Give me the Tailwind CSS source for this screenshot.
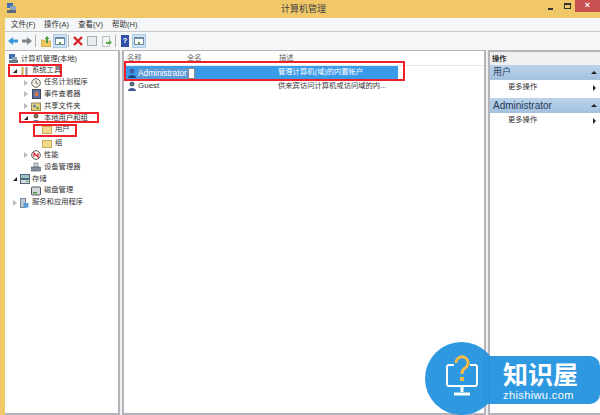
<!DOCTYPE html>
<html lang="zh">
<head>
<meta charset="UTF-8">
<title>计算机管理</title>
<script src="https://cdn.jsdelivr.net/npm/@tailwindcss/browser@4"></script>
</head>
<body class="w-[600px] h-[415px] overflow-hidden bg-[#f0c868] font-['Liberation_Sans','Noto_Sans_CJK_SC',sans-serif] text-[7.300px] text-[#333]">
<div class="relative w-[600px] h-[415px] flex flex-col">
  <!-- title bar -->
  <div class="h-[18px] flex relative shrink-0">
    <svg class="ml-[6px] mt-[3px] w-[11px] h-[11px]" viewBox="0 0 11 11"><rect x="1" y="0" width="6" height="5" fill="#3f6fb5"/><rect x="4" y="3" width="6" height="4" fill="#8fa3bb"/><rect x="1" y="7" width="9" height="3" fill="#5a6a80"/></svg>
    <div class="absolute left-[281px] top-[3px] text-[9px] leading-[12px] text-[#444]">计算机管理</div>
    <div class="ml-auto flex items-start h-full">
      <div class="w-[5px] h-[2px] bg-[#333] mt-[8px] mr-[11px]"></div>
      <div class="w-[7px] h-[6px] border border-[#333] border-t-2 mt-[3px] mr-[4px]"></div>
      <div class="w-[25px] h-[12px] bg-[#c75050] text-white text-[9px] leading-[11px] text-center font-bold">×</div>
    </div>
  </div>
  <div class="flex-1 ml-[5px] bg-[#f0f0f0] flex flex-col min-h-0">
    <!-- menu -->
    <div class="h-[14px] bg-[#f5f6f7] border-b border-[#c8c8c8] flex items-center pl-[6px] text-[7.500px] shrink-0">
      <span class="w-[33px]">文件(F)</span><span class="w-[34px]">操作(A)</span><span class="w-[34px]">查看(V)</span><span>帮助(H)</span>
    </div>
    <!-- toolbar -->
    <div class="h-[18px] bg-[#f5f6f7] flex items-center pl-[3px] shrink-0">
      <svg class="w-[10px] h-[10px] mr-[4px]" viewBox="0 0 10 10"><path d="M0 5 L5 1 V3.500 H10 V6.500 H5 V9 Z" fill="#3b9bd8"/></svg>
      <svg class="w-[10px] h-[10px] mr-[3px]" viewBox="0 0 10 10"><path d="M10 5 L5 1 V3.500 H0 V6.500 H5 V9 Z" fill="#7f868c"/></svg>
      <div class="w-px h-[12px] bg-[#b0b0b0] mr-[5px]"></div>
      <svg class="w-[10px] h-[11px] mr-[2px]" viewBox="0 0 10 11"><path d="M0 4h3l1 1h6v6H0z" fill="#ecc763" stroke="#b79a45" stroke-width=".6"/><path d="M6 0 L8.500 3 H7 V7 H5 V3 H3.500z" fill="#4f9a3c"/></svg>
      <div class="w-[14px] h-[14px] bg-[#cfe2f5] border border-[#a9cbe8] flex items-center justify-center mr-[1px]"><div class="w-[10px] h-[8px] bg-white border border-[#6f8aa0] border-t-2 flex items-end justify-center"><span class="w-[2px] h-[2px] bg-[#4f9a3c]"></span></div></div>
      <div class="w-px h-[12px] bg-[#b0b0b0] mr-[4px]"></div>
      <svg class="w-[10px] h-[10px] mr-[4px]" viewBox="0 0 10 10"><path d="M1 1 L9 9 M9 1 L1 9" stroke="#d8232a" stroke-width="2.400"/></svg>
      <div class="w-[10px] h-[10px] bg-[#e8eced] border border-[#a8b0b4] mr-[5px]"></div>
      <svg class="w-[10px] h-[11px] mr-[3px]" viewBox="0 0 10 11"><rect x="0.500" y="0.500" width="7" height="10" fill="#f4f6f6" stroke="#a4acb0" stroke-width=".7"/><path d="M4 6h3V4l3 2.500-3 2.500V8H4z" fill="#5aa845"/></svg>
      <div class="w-px h-[12px] bg-[#b0b0b0] mr-[5px]"></div>
      <div class="w-[8px] h-[12px] bg-[#2f4fa8] text-white text-[8px] leading-[12px] text-center font-bold mr-[3px]">?</div>
      <div class="w-[14px] h-[14px] bg-[#cfe2f5] border border-[#a9cbe8] flex items-center justify-center"><div class="w-[10px] h-[8px] bg-white border border-[#6f8aa0] border-t-2 flex items-end justify-center"><span class="w-[2px] h-[2px] bg-[#4f9a3c]"></span></div></div>
    </div>
    <!-- panes -->
    <div class="flex-1 flex min-h-0 gap-[2px] bg-[#f0f0f0]">
      <!-- tree -->
      <div class="w-[115px] bg-white border-r-2 border-t border-b-2 border-[#b4b4ba] pt-[2px] shrink-0 relative">
        <div class="h-[12px] flex items-center pl-[4px] gap-[3px]"><svg class="w-[9px] h-[10px] shrink-0" viewBox="0 0 9 10"><rect x="0" y="0" width="6" height="5" fill="#3f6fb5"/><rect x="3" y="3" width="5" height="3" fill="#8fa3bb"/><rect x="0" y="6" width="9" height="3" fill="#6b7a8c"/></svg><span>计算机管理(本地)</span></div>
        <div class="h-[11.800px] flex items-center pl-[8px]"><span class="w-0 h-0 border-l-[4px] border-l-transparent border-b-[4px] border-b-[#222]"></span><svg class="w-[9px] h-[10px] ml-[3px] mr-[3px] shrink-0" viewBox="0 0 9 10"><path d="M2.500 1v9" stroke="#c9a846" stroke-width="2"/><path d="M6.500 1v9" stroke="#8a8f94" stroke-width="2"/></svg><span>系统工具</span></div>
        <div class="h-[11.800px] flex items-center pl-[19px]"><span class="w-0 h-0 border-y-[3px] border-y-transparent border-l-[4px] border-l-[#bbb]"></span><svg class="w-[10px] h-[10px] ml-[3px] mr-[3px] shrink-0" viewBox="0 0 10 10"><circle cx="5" cy="5" r="4.300" fill="#f1ede2" stroke="#6b6b6b"/><path d="M5 2.500V5l2 1" fill="none" stroke="#444" stroke-width=".8"/></svg><span>任务计划程序</span></div>
        <div class="h-[11.800px] flex items-center pl-[19px]"><span class="w-0 h-0 border-y-[3px] border-y-transparent border-l-[4px] border-l-[#bbb]"></span><svg class="w-[9px] h-[10px] ml-[4px] mr-[3px] shrink-0" viewBox="0 0 9 10"><rect x="0.500" y="0.500" width="8" height="9" fill="#5f72a8" stroke="#445"/><rect x="3" y="3" width="3" height="4" fill="#d9773a"/></svg><span>事件查看器</span></div>
        <div class="h-[11.800px] flex items-center pl-[19px]"><span class="w-0 h-0 border-y-[3px] border-y-transparent border-l-[4px] border-l-[#bbb]"></span><svg class="w-[10px] h-[10px] ml-[3px] mr-[3px] shrink-0" viewBox="0 0 10 10"><rect x="0.500" y="2" width="9" height="7.500" fill="#e2cf83" stroke="#9a8a50"/><circle cx="3.500" cy="5" r="1.200" fill="#3f6fb5"/><circle cx="6.500" cy="7" r="1.200" fill="#4f9a3c"/></svg><span>共享文件夹</span></div>
        <div class="h-[11.800px] flex items-center pl-[19px]"><span class="w-0 h-0 border-l-[4px] border-l-transparent border-b-[4px] border-b-[#222]"></span><svg class="w-[10px] h-[10px] ml-[3px] mr-[3px] shrink-0" viewBox="0 0 10 10"><circle cx="5" cy="3" r="2.500" fill="#7b6a55"/><path d="M1 10c0-4 8-4 8 0z" fill="#3f6fb5"/></svg><span>本地用户和组</span></div>
        <div class="h-[11.800px] flex items-center pl-[37px] gap-[3px]"><span class="w-[10px] h-[8px] bg-[#f3d98b] border border-[#c9a95a]"></span><span>用户</span></div>
        <div class="h-[11.800px] flex items-center pl-[37px] gap-[3px] mt-[2px]"><span class="w-[10px] h-[8px] bg-[#f3d98b] border border-[#c9a95a]"></span><span>组</span></div>
        <div class="h-[11.800px] flex items-center pl-[19px]"><span class="w-0 h-0 border-y-[3px] border-y-transparent border-l-[4px] border-l-[#bbb]"></span><svg class="w-[10px] h-[10px] ml-[3px] mr-[3px] shrink-0" viewBox="0 0 10 10"><circle cx="5" cy="5" r="4.300" fill="#fff" stroke="#555"/><path d="M3 7V3l4 4V3" fill="none" stroke="#d8232a" stroke-width="1.200"/></svg><span>性能</span></div>
        <div class="h-[11.800px] flex items-center pl-[26px]"><svg class="w-[10px] h-[10px] mr-[3px] shrink-0" viewBox="0 0 10 10"><rect x="3" y="1" width="4" height="4" fill="#cfd6da" stroke="#667" stroke-width=".6"/><rect x="0.500" y="5" width="9" height="4" fill="#7f8e9a" stroke="#556" stroke-width=".6"/></svg><span>设备管理器</span></div>
        <div class="h-[11.800px] flex items-center pl-[8px]"><span class="w-0 h-0 border-l-[4px] border-l-transparent border-b-[4px] border-b-[#222]"></span><svg class="w-[10px] h-[10px] ml-[3px] mr-[2px] shrink-0" viewBox="0 0 10 10"><rect x="0.500" y="0.500" width="9" height="4" fill="#9cc3c8" stroke="#567"/><rect x="0.500" y="5.500" width="9" height="4" fill="#d6dde0" stroke="#567"/><rect x="6" y="7" width="2" height="1" fill="#4f9a3c"/></svg><span>存储</span></div>
        <div class="h-[11.800px] flex items-center pl-[26px]"><svg class="w-[10px] h-[10px] mr-[3px] shrink-0" viewBox="0 0 10 10"><rect x="0.500" y="1" width="9" height="8" rx="1" fill="#d4d8d8" stroke="#556"/><rect x="2" y="6" width="4" height="1.500" fill="#4f9a3c"/></svg><span>磁盘管理</span></div>
        <div class="h-[11.800px] flex items-center pl-[8px]"><span class="w-0 h-0 border-y-[3px] border-y-transparent border-l-[4px] border-l-[#bbb]"></span><svg class="w-[9px] h-[10px] ml-[3px] mr-[3px] shrink-0" viewBox="0 0 9 10"><rect x="0.500" y="0.500" width="5" height="9" fill="#b8c8d4" stroke="#789"/><rect x="3.500" y="5" width="5" height="4.500" fill="#5aa0d8"/></svg><span>服务和应用程序</span></div>
        <!-- red callouts -->
        <div class="absolute left-[3px] top-[13px] w-[54px] h-[13px] border-2 border-[#f0202a]"></div>
        <div class="absolute left-[14px] top-[61px] w-[80px] h-[11px] border-2 border-[#f0202a]"></div>
        <div class="absolute left-[28px] top-[73px] w-[44px] h-[13px] border-2 border-[#f0202a]"></div>
      </div>
      <!-- list -->
      <div class="w-[364px] bg-white border-x-2 border-t border-b-2 border-[#b4b4ba] relative shrink-0">
        <div class="h-[15px] border-b border-[#e8e8e8] grid grid-cols-[60px_92px_1fr] pl-[3px] items-center text-[#666]">
          <span>名称</span><span>全名</span><span>描述</span>
        </div>
        <div class="h-[13px] ml-[2px] grid grid-cols-[61px_91px_1fr] items-center bg-[#3a9be8] w-[272px] text-white">
          <span class="flex items-center h-full pl-[1px]"><svg class="w-[10px] h-[10px] shrink-0" viewBox="0 0 10 10"><circle cx="5" cy="3" r="2.500" fill="#3f5ea8"/><path d="M1 10c0-4 8-4 8 0z" fill="#24448a"/></svg></span>
          <span></span>
          <span class="whitespace-nowrap">管理计算机(域)的内置帐户</span>
        </div>
        <div class="absolute left-[13px] top-[17px] h-[11px] flex">
          <span class="bg-[#5a9ad8] text-white h-[11px] leading-[11px] text-[8.300px] px-[1px] whitespace-nowrap">Administrator</span>
          <span class="bg-white w-[7px] h-[11px] border border-[#888]"></span>
        </div>
        <div class="mt-[1px] h-[12px] ml-[2px] grid grid-cols-[61px_91px_1fr] items-center">
          <span class="flex items-center gap-[1px] pl-[1px] text-[8px]"><svg class="w-[10px] h-[10px] shrink-0" viewBox="0 0 10 10"><circle cx="5" cy="3" r="2.500" fill="#5a6a80"/><path d="M1 10c0-4 8-4 8 0z" fill="#3a5a90"/></svg>Guest</span>
          <span></span>
          <span class="whitespace-nowrap">供来宾访问计算机或访问域的内...</span>
        </div>
        <div class="absolute left-[0px] top-[10px] w-[281px] h-[20px] border-2 border-[#f0202a]"></div>
      </div>
      <!-- actions -->
      <div class="flex-1 bg-white border-l-2 border-t-2 border-b-2 border-[#b4b4ba] min-w-0">
        <div class="h-[13px] bg-[#f0f0f0] pl-[2px] leading-[13px] font-bold text-[#333]">操作</div>
        <div class="h-[15px] bg-[linear-gradient(#bcd3ea,#a3c0de)] pl-[3px] flex items-center text-[9px] text-[#1e3a5a]">用户<span class="ml-auto mr-[3px] w-0 h-0 border-x-[3px] border-x-transparent border-b-[3px] border-b-[#222]"></span></div>
        <div class="h-[18px] pl-[18px] pb-[3px] flex items-center">更多操作<span class="ml-auto mr-[4px] w-0 h-0 border-y-[3px] border-y-transparent border-l-[3px] border-l-[#222]"></span></div>
        <div class="h-[15px] bg-[linear-gradient(#bcd3ea,#a3c0de)] pl-[3px] flex items-center text-[10px] text-[#1e3a5a]">Administrator<span class="ml-auto mr-[3px] w-0 h-0 border-x-[3px] border-x-transparent border-b-[3px] border-b-[#222]"></span></div>
        <div class="h-[18px] pl-[18px] pb-[3px] flex items-center">更多操作<span class="ml-auto mr-[4px] w-0 h-0 border-y-[3px] border-y-transparent border-l-[3px] border-l-[#222]"></span></div>
      </div>
    </div>
  </div>
  <!-- watermark -->
  <div class="absolute left-[425px] top-[342px] w-[175px] h-[73px] opacity-95">
    <div class="absolute left-0 top-0 w-[73px] h-[73px] rounded-full bg-[#2394e0]"></div>
    <div class="absolute left-[60px] top-[14px] w-[115px] h-[48px] rounded-r-[10px] bg-[#2394e0] text-white">
      <div class="absolute left-[18px] top-[4px] text-[25px] leading-[30px] font-bold whitespace-nowrap">知识屋</div>
      <div class="absolute left-[18px] top-[33px] text-[11px] leading-[12px] tracking-[0.400px] whitespace-nowrap">zhishiwu.com</div>
    </div>
    <svg class="absolute left-[21px] top-[13px] w-[32px] h-[42px]" viewBox="0 0 32 42"><path d="M8 10H3a2 2 0 0 0-2 2v17a2 2 0 0 0 2 2h26a2 2 0 0 0 2-2V12a2 2 0 0 0-2-2h-5" fill="none" stroke="#fff" stroke-width="2"/><path d="M16 31v6M8 39h16" stroke="#fff" stroke-width="3"/><path d="M10 8a6 6 0 1 1 9 5c-2 1-3 2-3 6" fill="none" stroke="#f5b83d" stroke-width="3"/><rect x="14" y="22" width="4" height="4" fill="#f5b83d"/></svg>
  </div>
</div>
</body>
</html>
